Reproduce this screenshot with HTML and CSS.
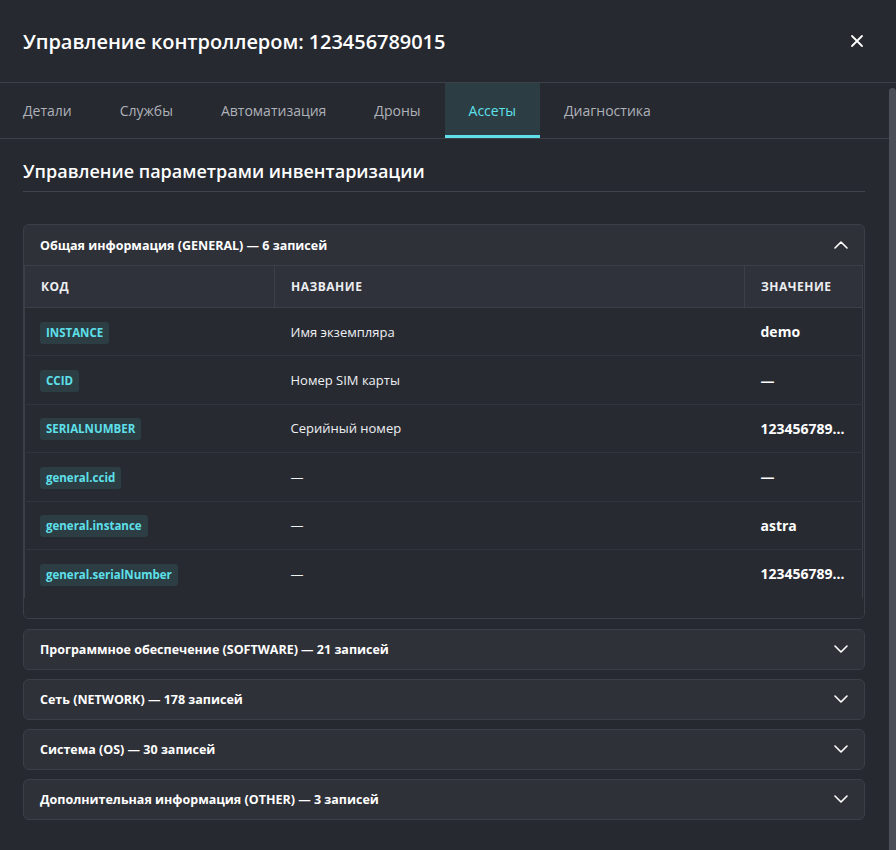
FILE: index.html
```html
<!DOCTYPE html>
<html lang="ru">

<head>
    <meta charset="UTF-8">
    <meta name="viewport" content="width=device-width, initial-scale=1.0">
    <title>Управление контроллером</title>
    <link rel="stylesheet" href="styles.css">
</head>

<body>
    <div class="modal">
        <div class="modal-header">
            <h1 class="modal-title">Управление контроллером: 123456789015</h1>
            <button class="close-btn" aria-label="Закрыть">
                <svg width="14" height="14" viewBox="0 0 14 14" fill="none">
                    <path d="M2 2L12 12M12 2L2 12" stroke="#ffffff" stroke-width="1.8" stroke-linecap="round" />
                </svg>
            </button>
        </div>

        <div class="modal-main">
            <div class="modal-scroll">
                <nav class="tabs">
                    <a href="#" class="tab">Детали</a>
                    <a href="#" class="tab">Службы</a>
                    <a href="#" class="tab">Автоматизация</a>
                    <a href="#" class="tab">Дроны</a>
                    <a href="#" class="tab active">Ассеты</a>
                    <a href="#" class="tab">Диагностика</a>
                </nav>

                <div class="modal-body">
                    <h2 class="section-title">Управление параметрами инвентаризации</h2>

                    <!-- Open group -->
                    <div class="group open">
                        <div class="group-header">
                            <span>Общая информация (GENERAL) — 6 записей</span>
                            <svg class="chevron" width="14" height="8" viewBox="0 0 14 8" fill="none">
                                <path d="M1 7L7 1L13 7" stroke="#ffffff" stroke-width="1.6" stroke-linecap="round" stroke-linejoin="round" />
                            </svg>
                        </div>
                        <div class="group-body">
                            <table class="params">
                                <colgroup>
                                    <col class="col-code">
                                    <col class="col-name">
                                    <col class="col-value">
                                </colgroup>
                                <thead>
                                    <tr>
                                        <th>Код</th>
                                        <th>Название</th>
                                        <th>Значение</th>
                                    </tr>
                                </thead>
                                <tbody>
                                    <tr>
                                        <td><span class="code">INSTANCE</span></td>
                                        <td class="name">Имя экземпляра</td>
                                        <td class="value">demo</td>
                                    </tr>
                                    <tr>
                                        <td><span class="code">CCID</span></td>
                                        <td class="name">Номер SIM карты</td>
                                        <td class="value">—</td>
                                    </tr>
                                    <tr>
                                        <td><span class="code">SERIALNUMBER</span></td>
                                        <td class="name">Серийный номер</td>
                                        <td class="value">123456789015</td>
                                    </tr>
                                    <tr>
                                        <td><span class="code">general.ccid</span></td>
                                        <td class="name">—</td>
                                        <td class="value">—</td>
                                    </tr>
                                    <tr>
                                        <td><span class="code">general.instance</span></td>
                                        <td class="name">—</td>
                                        <td class="value">astra</td>
                                    </tr>
                                    <tr>
                                        <td><span class="code">general.serialNumber</span></td>
                                        <td class="name">—</td>
                                        <td class="value">123456789015</td>
                                    </tr>
                                </tbody>
                            </table>
                        </div>
                    </div>

                    <!-- Collapsed groups -->
                    <div class="group">
                        <div class="group-header">
                            <span>Программное обеспечение (SOFTWARE) — 21 записей</span>
                            <svg class="chevron" width="14" height="8" viewBox="0 0 14 8" fill="none">
                                <path d="M1 1L7 7L13 1" stroke="#ffffff" stroke-width="1.6" stroke-linecap="round" stroke-linejoin="round" />
                            </svg>
                        </div>
                    </div>
                    <div class="group">
                        <div class="group-header">
                            <span>Сеть (NETWORK) — 178 записей</span>
                            <svg class="chevron" width="14" height="8" viewBox="0 0 14 8" fill="none">
                                <path d="M1 1L7 7L13 1" stroke="#ffffff" stroke-width="1.6" stroke-linecap="round" stroke-linejoin="round" />
                            </svg>
                        </div>
                    </div>
                    <div class="group">
                        <div class="group-header">
                            <span>Система (OS) — 30 записей</span>
                            <svg class="chevron" width="14" height="8" viewBox="0 0 14 8" fill="none">
                                <path d="M1 1L7 7L13 1" stroke="#ffffff" stroke-width="1.6" stroke-linecap="round" stroke-linejoin="round" />
                            </svg>
                        </div>
                    </div>
                    <div class="group">
                        <div class="group-header">
                            <span>Дополнительная информация (OTHER) — 3 записей</span>
                            <svg class="chevron" width="14" height="8" viewBox="0 0 14 8" fill="none">
                                <path d="M1 1L7 7L13 1" stroke="#ffffff" stroke-width="1.6" stroke-linecap="round" stroke-linejoin="round" />
                            </svg>
                        </div>
                    </div>
                </div>
            </div>

            <!-- scroll rail -->
            <div class="scroll-thumb"></div>
        </div>
    </div>
</body>

</html>
```

FILE: styles.css
```css
/* Base */
* {
    margin: 0;
    padding: 0;
    box-sizing: border-box;
    font-family: 'Open Sans', 'Noto Sans', sans-serif;
}

body {
    background-color: #262930;
    color: #e8e9ec;
}

/* Modal layout */
.modal {
    display: flex;
    flex-direction: column;
    height: 850px;
    background-color: #262930;
    overflow: hidden;
}

.modal-header {
    display: flex;
    align-items: center;
    justify-content: space-between;
    height: 83px;
    flex-shrink: 0;
    padding: 0 32px 0 23px;
    border-bottom: 1px solid #3d4048;
}

.modal-title {
    font-size: 20px;
    font-weight: 600;
    color: #ffffff;
    letter-spacing: -0.05px;
}

.close-btn {
    background: none;
    border: none;
    cursor: pointer;
    display: flex;
    padding: 0;
}

.modal-main {
    flex: 1;
    display: flex;
    min-height: 0;
}

.modal-scroll {
    flex: 1 1 0;
    min-width: 0;
    overflow: hidden;
}

.scroll-thumb {
    flex: 0 0 7px;
    margin-top: 5px;
    background-color: #4c4f58;
    border-radius: 4px 4px 0 0;
}

/* Tabs */
.tabs {
    display: flex;
    height: 56px;
    border-bottom: 1px solid #3d4048;
}

.tab {
    display: flex;
    align-items: center;
    padding: 0 24px;
    font-size: 14px;
    color: #aeb1b8;
    text-decoration: none;
    border-bottom: 3px solid transparent;
    padding-top: 2px;
}

.tab:first-child {
    padding-left: 23px;
}

.tab.active {
    background-color: #2d3d44;
    color: #5fe0ea;
    border-bottom-color: #5fe0ea;
}

/* Body */
.modal-body {
    padding: 20px 24px 40px 23px;
}

.section-title {
    font-size: 18px;
    font-weight: 600;
    color: #ffffff;
    line-height: 24px;
    padding-bottom: 8px;
    border-bottom: 1px solid #41444c;
    margin-bottom: 32px;
}

/* Accordion groups */
.group {
    border: 1px solid #3c3f48;
    border-radius: 6px;
    background-color: #2f3139;
    margin-bottom: 9px;
    overflow: hidden;
}

.group.open {
    margin-bottom: 10px;
}

.group-header {
    display: flex;
    align-items: center;
    justify-content: space-between;
    height: 39px;
    padding: 0 16px;
    font-size: 12.5px;
    font-weight: 700;
    color: #ffffff;
}

.group.open .group-header {
    height: 40px;
}

.group-body {
    background-color: #282a32;
    padding: 0 1px 20px 0;
}

/* Parameters table */
.params {
    width: 100%;
    border-collapse: collapse;
    table-layout: fixed;
    border-left: 1px solid #3c3f48;
    border-right: 1px solid #3c3f48;
}

.col-code {
    width: 250px;
}

.col-value {
    width: 118px;
}

.params th {
    height: 42px;
    background-color: #30323b;
    border-top: 1px solid #3c3f48;
    border-bottom: 1px solid #3c3f48;
    border-right: 1px solid #3c3f48;
    padding: 0 16px;
    text-align: left;
    font-size: 12px;
    font-weight: 700;
    letter-spacing: 0.5px;
    text-transform: uppercase;
    color: #eceef1;
}

.params th:last-child {
    border-right: none;
}

.params td {
    height: 48.4px;
    padding: 0 16px;
    border-bottom: 1px solid #32353d;
    white-space: nowrap;
    overflow: hidden;
    text-overflow: ellipsis;
}

.params td:first-child {
    padding-left: 15px;
}

.params tbody tr:last-child td {
    border-bottom: none;
}

.code {
    display: inline-block;
    background-color: #2c3d44;
    color: #5ee0ea;
    font-size: 11.5px;
    font-weight: 700;
    line-height: 22px;
    padding: 0 6px;
    border-radius: 3px;
}

.name {
    font-size: 13px;
    color: #eef0f2;
}

.value {
    font-size: 14px;
    font-weight: 700;
    color: #ffffff;
}
```
